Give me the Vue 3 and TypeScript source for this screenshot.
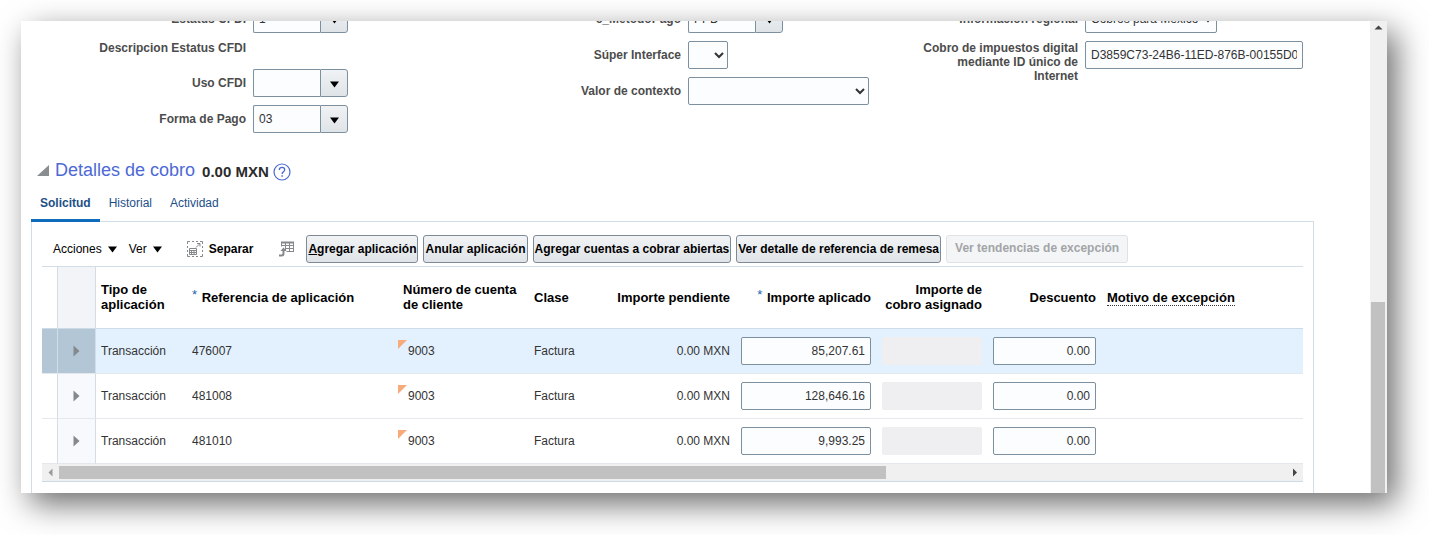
<script setup lang="ts">
import { ref } from 'vue'

interface Aplicacion {
  tipo: string
  referencia: string
  cuenta: string
  clase: string
  pendiente: string
  aplicado: string
  descuento: string
}

const filas = ref<Aplicacion[]>([
  { tipo: 'Transacción', referencia: '476007', cuenta: '9003', clase: 'Factura', pendiente: '0.00 MXN', aplicado: '85,207.61', descuento: '0.00' },
  { tipo: 'Transacción', referencia: '481008', cuenta: '9003', clase: 'Factura', pendiente: '0.00 MXN', aplicado: '128,646.16', descuento: '0.00' },
  { tipo: 'Transacción', referencia: '481010', cuenta: '9003', clase: 'Factura', pendiente: '0.00 MXN', aplicado: '9,993.25', descuento: '0.00' },
])

const seleccionada = ref(0)
const pestanas = ['Solicitud', 'Historial', 'Actividad']
const activa = ref('Solicitud')

const estatus = ref('1')
const usoCfdi = ref('')
const formaPago = ref('03')
const metodoPago = ref('PPD')
const idInternet = ref('D3859C73-24B6-11ED-876B-00155D012E07')
</script>

<template>
  <div class="page">
    <div class="window">
      <main class="content">
        <form class="fields" @submit.prevent>
          <div class="column">
            <div class="field">
              <label for="estatus">Estatus CFDI</label>
              <div class="combo">
                <input id="estatus" v-model="estatus" type="text" />
                <button type="button" aria-label="Buscar Estatus CFDI">
                  <svg width="9" height="7" viewBox="0 0 9 7"><path d="M0 0.5h9L4.5 6.5z" /></svg>
                </button>
              </div>
            </div>
            <div class="field static"><span class="label">Descripcion Estatus CFDI</span></div>
            <div class="field">
              <label for="uso">Uso CFDI</label>
              <div class="combo">
                <input id="uso" v-model="usoCfdi" type="text" />
                <button type="button" aria-label="Buscar Uso CFDI">
                  <svg width="9" height="7" viewBox="0 0 9 7"><path d="M0 0.5h9L4.5 6.5z" /></svg>
                </button>
              </div>
            </div>
            <div class="field">
              <label for="forma">Forma de Pago</label>
              <div class="combo">
                <input id="forma" v-model="formaPago" type="text" />
                <button type="button" aria-label="Buscar Forma de Pago">
                  <svg width="9" height="7" viewBox="0 0 9 7"><path d="M0 0.5h9L4.5 6.5z" /></svg>
                </button>
              </div>
            </div>
          </div>

          <div class="column">
            <div class="field">
              <label for="metodo">c_MetodoPago</label>
              <div class="combo">
                <input id="metodo" v-model="metodoPago" type="text" />
                <button type="button" aria-label="Buscar c_MetodoPago">
                  <svg width="9" height="7" viewBox="0 0 9 7"><path d="M0 0.5h9L4.5 6.5z" /></svg>
                </button>
              </div>
            </div>
            <div class="field">
              <label for="super">Súper Interface</label>
              <select id="super" class="tiny"><option></option></select>
            </div>
            <div class="field">
              <label for="contexto">Valor de contexto</label>
              <select id="contexto" class="wide"><option></option></select>
            </div>
          </div>

          <div class="column">
            <div class="field">
              <label for="regional">Información regional</label>
              <select id="regional" class="medium"><option>Cobros para México</option></select>
            </div>
            <div class="field top">
              <label for="internet">Cobro de impuestos digital mediante ID único de Internet</label>
              <input id="internet" v-model="idInternet" class="long" type="text" />
            </div>
          </div>
        </form>

        <section class="details">
          <header class="heading">
            <button class="disclosure" type="button" aria-label="Contraer Detalles de cobro">
              <svg width="12" height="11" viewBox="0 0 12 11"><path d="M12 0v11H0z" fill="#8a8d8f" /></svg>
            </button>
            <h2>Detalles de cobro</h2>
            <strong>0.00 MXN</strong>
            <button class="help" type="button" aria-label="Ayuda">
              <svg width="18" height="18" viewBox="0 0 18 18" fill="none" stroke="#4a68d4">
                <circle cx="9" cy="9" r="8" stroke-width="1.2" />
                <path d="M6.3 7C6.3 5.3 7.4 4.4 9 4.4s2.7 1 2.7 2.4c0 1.9-2.6 2-2.6 4.2" stroke-width="1.3" />
                <path d="M9.1 12.2v1.6" stroke-width="1.5" />
              </svg>
            </button>
          </header>

          <nav class="tabs">
            <a
              v-for="p in pestanas"
              :key="p"
              href="#"
              :class="{ active: p === activa }"
              @click.prevent="activa = p"
            >{{ p }}</a>
          </nav>

          <div class="panel">
            <div class="toolbar">
              <button class="menu" type="button">
                Acciones
                <svg width="9" height="7" viewBox="0 0 9 7"><path d="M0 0.5h9L4.5 6.5z" /></svg>
              </button>
              <button class="menu" type="button">
                Ver
                <svg width="9" height="7" viewBox="0 0 9 7"><path d="M0 0.5h9L4.5 6.5z" /></svg>
              </button>
              <button class="detach" type="button">
                <svg width="16" height="16" viewBox="0 0 16 16" fill="none" stroke="#85898c">
                  <path d="M0.5 3V0.5H3M5 0.5h2M9 0.5h2M13 0.5h2.5V3M15.5 5v2M15.5 9v2M15.5 13v2.5H13M11 15.5H9M7 15.5H5M3 15.5H0.5V13M0.5 11V9M0.5 7V5" />
                  <path d="M2.5 7.5h7v6h-7zM2.5 9.5h7M2.5 11.5h7M4.5 9.5v4M7 9.5v4" />
                  <path d="M9 6.5l3.5-3.5M10 2.5h3v3" />
                </svg>
                Separar
              </button>
              <button class="wrap" type="button" aria-label="Ajustar">
                <svg width="16" height="16" viewBox="0 0 16 16" fill="none" stroke="#85898c">
                  <path d="M2 1.5h13" stroke-width="2" />
                  <path d="M2.5 1v4.5M6.5 1v9M10.5 1v9.5M14.5 1v9.5M2 4.5h13M6 7.5h9M7.5 10.5H15" />
                  <path d="M0 14.5h2.5q2 0 2-2V9" stroke-width="2" />
                  <path d="M1.5 10l3-3.500 3 3.500z" fill="#85898c" stroke="none" />
                </svg>
              </button>
              <div class="actions">
                <button type="button"><u>A</u>gregar aplicación</button>
                <button type="button">Anular aplicación</button>
                <button type="button">Agregar cuentas a cobrar abiertas</button>
                <button type="button">Ver detalle de referencia de remesa</button>
                <button type="button" class="off" disabled>Ver tendencias de excepción</button>
              </div>
            </div>

            <table>
              <colgroup>
                <col class="c-mark" /><col class="c-expand" /><col class="c-tipo" /><col class="c-ref" />
                <col class="c-cuenta" /><col class="c-clase" /><col class="c-pend" /><col class="c-aplic" />
                <col class="c-asig" /><col class="c-desc" /><col />
              </colgroup>
              <thead>
                <tr>
                  <th class="mark"></th>
                  <th class="expand"></th>
                  <th>Tipo de aplicación</th>
                  <th><span class="required">*</span> Referencia de aplicación</th>
                  <th>Número de cuenta de cliente</th>
                  <th>Clase</th>
                  <th class="num">Importe pendiente</th>
                  <th class="num"><span class="required">*</span> Importe aplicado</th>
                  <th class="num">Importe de cobro asignado</th>
                  <th class="num">Descuento</th>
                  <th><span class="hint">Motivo de excepción</span></th>
                </tr>
              </thead>
              <tbody>
                <tr
                  v-for="(f, i) in filas"
                  :key="f.referencia"
                  :class="{ selected: i === seleccionada }"
                  @click="seleccionada = i"
                >
                  <td class="mark"></td>
                  <td class="expand">
                    <button type="button" :aria-label="'Expandir ' + f.referencia">
                      <svg width="7" height="12" viewBox="0 0 7 12"><path d="M0.5 0.5v11L6.5 6z" fill="#84898d" /></svg>
                    </button>
                  </td>
                  <td>{{ f.tipo }}</td>
                  <td>{{ f.referencia }}</td>
                  <td class="account"><i class="corner"></i>{{ f.cuenta }}</td>
                  <td>{{ f.clase }}</td>
                  <td class="num">{{ f.pendiente }}</td>
                  <td><input v-model="f.aplicado" type="text" :aria-label="'Importe aplicado ' + f.referencia" /></td>
                  <td><input type="text" disabled :aria-label="'Importe de cobro asignado ' + f.referencia" /></td>
                  <td><input v-model="f.descuento" type="text" :aria-label="'Descuento ' + f.referencia" /></td>
                  <td></td>
                </tr>
              </tbody>
            </table>

            <div class="hscroll">
              <svg width="17" height="17" viewBox="0 0 17 17"><path d="M10.5 4.5v8l-4-4z" fill="#9a9a9a" /></svg>
              <div class="rail"><div class="thumb"></div></div>
              <svg width="17" height="17" viewBox="0 0 17 17"><path d="M7 4.5v8l4-4z" fill="#454545" /></svg>
            </div>
          </div>
        </section>
      </main>

      <div class="vscroll">
        <svg width="17" height="17" viewBox="0 0 17 17"><path d="M4.5 8.5h8l-4-4z" fill="#454545" /></svg>
        <div></div>
        <div class="thumb"></div>
      </div>
    </div>
  </div>
</template>

<style>
body {
  margin: 0;
  background: #fff;
}
</style>

<style scoped>
.page {
  padding: 21px 42px 42px 21px;
  font: 12px/14px "Liberation Sans", Arial, sans-serif;
  color: #333;
}
.page * {
  box-sizing: border-box;
}
.window {
  display: flex;
  overflow: hidden;
  background: #fff;
  box-shadow: 9px 11px 30px rgba(0, 0, 0, 0.58);
}
.content {
  flex: 1;
  min-width: 0;
}
button,
input,
select {
  font: inherit;
  color: inherit;
  margin: 0;
}
button {
  padding: 0;
  border: 0;
  background: none;
}
svg {
  display: block;
  flex: none;
}

/* Receipt attributes */
.fields {
  display: grid;
  grid-template-columns: minmax(0, 435fr) minmax(0, 397fr) minmax(0, 517fr);
  margin-top: -16px;
}
.column {
  display: flex;
  flex-direction: column;
  gap: 8px;
}
.field {
  display: flex;
  align-items: center;
  gap: 7px;
}
.field.static {
  align-items: flex-start;
  height: 20px;
}
.field.top {
  align-items: flex-start;
}
.field label,
.field .label {
  flex: none;
  width: 225px;
  padding-left: 65px;
  text-align: right;
  font-weight: bold;
  color: #4c4c4c;
}
input,
select {
  flex: none;
  height: 28px;
  border: 1px solid #7d909f;
  border-radius: 2px;
  background: #fcfdff;
}
input {
  padding: 0 5px;
}
.combo {
  display: flex;
}
.combo input {
  width: 67px;
  border-right: 0;
  border-radius: 2px 0 0 2px;
}
.combo button {
  display: flex;
  align-items: center;
  justify-content: center;
  width: 28px;
  height: 28px;
  padding-top: 2px;
  border: 1px solid #7d909f;
  border-radius: 0 3px 3px 0;
  background: linear-gradient(#f0f2f4, #dfe4e8);
}
select {
  padding: 0 1px;
}
.tiny {
  width: 40px;
}
.medium {
  width: 132px;
}
.wide {
  width: 181px;
}
.long {
  width: 218px;
}

/* Section heading */
.details {
  margin: 25px 56px 0 10px;
}
.heading {
  display: flex;
  align-items: center;
  height: 28px;
  padding-left: 6px;
}
.disclosure {
  margin-right: 6px;
  padding-bottom: 4px;
}
h2 {
  margin: 0 7px 0 0;
  padding-bottom: 4px;
  font-size: 18px;
  line-height: 20px;
  font-weight: normal;
  color: #4d69d6;
}
.heading strong {
  margin-right: 4px;
  font-size: 15px;
  line-height: 20px;
  color: #2b2b2b;
}

.tabs {
  display: flex;
  position: relative;
  margin-bottom: -1px;
}
.tabs a {
  height: 36px;
  padding: 1px 9px 0;
  border-bottom: 3px solid transparent;
  line-height: 33px;
  text-decoration: none;
  color: #1d4f86;
}
.tabs a.active {
  border-color: #0f6cbd;
  font-weight: bold;
}
.panel {
  padding: 0 10px 11px;
  border: 1px solid #d3dde5;
  border-bottom: 0;
}

/* Toolbar */
.toolbar {
  display: flex;
  align-items: center;
  height: 45px;
  padding: 9px 0 0 11px;
  border-bottom: 1px solid #d3dde5;
  color: #000;
}
.menu {
  display: flex;
  align-items: center;
  gap: 6px;
  margin-right: 12px;
}
.menu svg {
  margin-top: 2px;
}
.detach {
  display: flex;
  align-items: center;
  gap: 6px;
  margin: 0 26px 0 13px;
  font-weight: bold;
}
.wrap {
  margin-right: 11px;
}
.actions {
  display: flex;
  gap: 5px;
}
.actions button {
  height: 28px;
  padding: 0 1px;
  border: 1px solid #7d8b98;
  border-radius: 3px;
  background: linear-gradient(#f1f3f5, #e0e4e8);
  font-weight: bold;
  white-space: nowrap;
}
.actions .off {
  padding: 0 8px 2px;
  border-color: #dfe3e6;
  background: #f4f5f7;
  color: #a2a5a7;
}

/* Applications table */
table {
  width: 100%;
  table-layout: fixed;
  border-collapse: separate;
  border-spacing: 0;
}
.c-mark { width: 16px; }
.c-expand { width: 38px; }
.c-tipo { width: 91px; }
.c-ref { width: 211px; }
.c-cuenta { width: 131px; }
.c-clase { width: 71px; }
.c-pend { width: 136px; }
.c-aplic { width: 141px; }
.c-asig { width: 111px; }
.c-desc { width: 114px; }
th,
td {
  padding: 0 6px 0 5px;
  text-align: left;
  vertical-align: middle;
}
th {
  height: 62px;
  padding-bottom: 1px;
  border-bottom: 1px solid #cddbe6;
  font-size: 13px;
  line-height: 15px;
  color: #000;
}
td {
  height: 45px;
  border-bottom: 1px solid #e4e8ec;
}
.num {
  text-align: right;
}
.mark,
.expand {
  padding: 0;
  border-right: 1px solid #d3dde5;
}
th.expand {
  background: #f2f4f8;
}
td.expand {
  background: #f7f9fd;
}
.expand button {
  display: block;
  margin: 0 auto;
}
.selected td {
  background: #e3f1fe;
}
.selected .mark,
.selected .expand {
  background: #b3c6d5;
}
.required {
  position: relative;
  top: -3px;
  margin-right: 1px;
  font-weight: normal;
  color: #1b66ad;
}
.hint {
  border-bottom: 1px dotted #333;
}
.account {
  position: relative;
  padding-left: 10px;
}
.corner {
  position: absolute;
  top: 11px;
  left: 0;
  border-top: 9px solid #f7ab7a;
  border-right: 9px solid transparent;
}
td input {
  display: block;
  width: 100%;
  text-align: right;
}
td input:disabled {
  border-color: #efeff1;
  background: #efeff1;
}

/* Scroll bars */
.hscroll {
  display: flex;
  height: 18px;
  border-bottom: 1px solid #cddae4;
  background: #f0f0f0;
}
.rail {
  display: grid;
  flex: 1;
  grid-template-columns: 827fr 400fr;
  padding: 2px 0;
}
.rail .thumb {
  height: 13px;
  background: #c1c1c1;
}
.vscroll {
  display: grid;
  grid-template-rows: 17px 264fr 191fr;
  flex: none;
  width: 17px;
  background: #f0f0f0;
}
.vscroll .thumb {
  margin: 0 2px 0 1px;
  background: #c1c1c1;
}
</style>
